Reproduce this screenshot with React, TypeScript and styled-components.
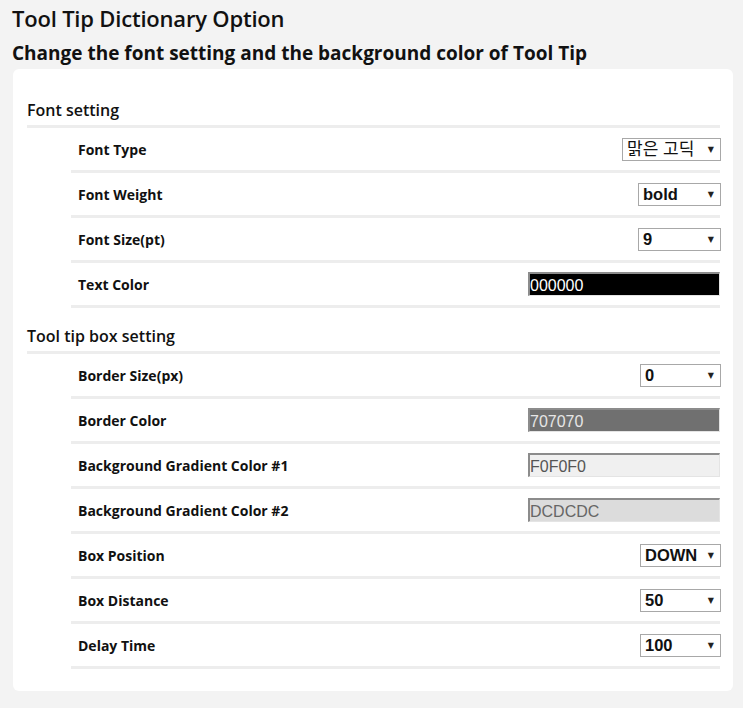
import React, { useState } from 'react';
import styled, { createGlobalStyle } from 'styled-components';

const GlobalStyle = createGlobalStyle`
  * {
    margin: 0;
    padding: 0;
    box-sizing: border-box;
  }
  html, body {
    width: 100%;
    height: 100%;
    background-color: #f3f3f3;
  }
`;

const Page = styled.div`
  padding: 5px 0 16px 12px;
  font-family: 'Open Sans', 'Noto Sans CJK KR', sans-serif;
  color: #111;
`;

const Title = styled.h1`
  font-size: 22px;
  font-weight: 600;
  line-height: 26px;
  letter-spacing: -0.2px;
`;

const Subtitle = styled.h2`
  font-size: 19px;
  font-weight: 700;
  line-height: 24px;
  margin-top: 10px;
  margin-bottom: 4px;
`;

const Card = styled.div`
  background: #ffffff;
  border-radius: 6px;
  margin-right: 10px;
  margin-left: 1px;
  padding: 13px 13px 22px 14px;
`;

const SectionHeader = styled.div`
  font-size: 16px;
  font-weight: 600;
  line-height: 20px;
  padding: 18px 0 5px 0;
  border-bottom: 3px solid #ededed;
`;

const Row = styled.div`
  display: flex;
  align-items: center;
  justify-content: space-between;
  height: 45px;
  margin-left: 44px;
  padding-left: 7px;
  border-bottom: 3px solid #ededed;
`;

const Label = styled.span`
  font-size: 14px;
  font-weight: 700;
`;

const SelectWrap = styled.div<{ $width: number }>`
  position: relative;
  width: ${p => p.$width}px;
  height: 23px;
  margin-right: -1px;
`;

const Select = styled.select<{ $weight: number; $size: number }>`
  appearance: none;
  -webkit-appearance: none;
  width: 100%;
  height: 100%;
  border: 1px solid #a8a8a8;
  border-radius: 0;
  background: #fff;
  font-family: 'Liberation Sans', Arial, 'Noto Sans CJK KR', sans-serif;
  font-size: ${p => p.$size}px;
  font-weight: ${p => p.$weight};
  color: #111;
  padding: 0 0 0 4px;
  outline: none;
`;

const Arrow = styled.span`
  position: absolute;
  right: 7px;
  top: 7px;
  font-size: 8px;
  line-height: 9px;
  color: #222;
  pointer-events: none;
  font-family: 'DejaVu Sans', sans-serif;
`;

const ColorInput = styled.input<{ $bg: string; $fg: string }>`
  width: 192px;
  height: 24px;
  border-style: solid;
  border-width: 2px 1px 1px 2px;
  border-color: #8c8c8c #e4e4e4 #e4e4e4 #8c8c8c;
  background: ${p => p.$bg};
  color: ${p => p.$fg};
  font-family: 'Liberation Sans', Arial, sans-serif;
  font-size: 16px;
  padding: 2px 0 0 0;
  outline: none;
`;

type SelectField = { kind: 'select'; label: string; value: string; options: string[]; width: number; weight?: number; size?: number };
type ColorField = { kind: 'color'; label: string; value: string; fg: string };
type Field = SelectField | ColorField;

const fontFields: Field[] = [
  { kind: 'select', label: 'Font Type', value: '맑은 고딕', options: ['맑은 고딕', '굴림', '돋움', '바탕'], width: 99, weight: 400, size: 17 },
  { kind: 'select', label: 'Font Weight', value: 'bold', options: ['normal', 'bold'], width: 83 },
  { kind: 'select', label: 'Font Size(pt)', value: '9', options: ['8', '9', '10', '11', '12'], width: 83 },
  { kind: 'color', label: 'Text Color', value: '000000', fg: '#ffffff' },
];

const boxFields: Field[] = [
  { kind: 'select', label: 'Border Size(px)', value: '0', options: ['0', '1', '2', '3'], width: 81 },
  { kind: 'color', label: 'Border Color', value: '707070', fg: '#e6e6e6' },
  { kind: 'color', label: 'Background Gradient Color #1', value: 'F0F0F0', fg: '#555555' },
  { kind: 'color', label: 'Background Gradient Color #2', value: 'DCDCDC', fg: '#666666' },
  { kind: 'select', label: 'Box Position', value: 'DOWN', options: ['UP', 'DOWN'], width: 81 },
  { kind: 'select', label: 'Box Distance', value: '50', options: ['10', '30', '50', '70'], width: 81 },
  { kind: 'select', label: 'Delay Time', value: '100', options: ['0', '100', '300', '500'], width: 81 },
];

function FieldRow({ field }: { field: Field }) {
  const [value, setValue] = useState(field.value);
  return (
    <Row>
      <Label>{field.label}</Label>
      {field.kind === 'select' ? (
        <SelectWrap $width={field.width}>
          <Select
            value={value}
            $weight={field.weight ?? 700}
            $size={field.size ?? 16.5}
            onChange={e => setValue(e.target.value)}
          >
            {field.options.map(o => (
              <option key={o} value={o}>{o}</option>
            ))}
          </Select>
          <Arrow>▼</Arrow>
        </SelectWrap>
      ) : (
        <ColorInput
          value={value}
          onChange={e => setValue(e.target.value)}
          $bg={'#' + value}
          $fg={field.fg}
        />
      )}
    </Row>
  );
}

export default function App() {
  return (
    <>
      <GlobalStyle />
      <Page>
        <Title>Tool Tip Dictionary Option</Title>
        <Subtitle>Change the font setting and the background color of Tool Tip</Subtitle>
        <Card>
          <SectionHeader>Font setting</SectionHeader>
          {fontFields.map(f => <FieldRow key={f.label} field={f} />)}
          <SectionHeader>Tool tip box setting</SectionHeader>
          {boxFields.map(f => <FieldRow key={f.label} field={f} />)}
        </Card>
      </Page>
    </>
  );
}
